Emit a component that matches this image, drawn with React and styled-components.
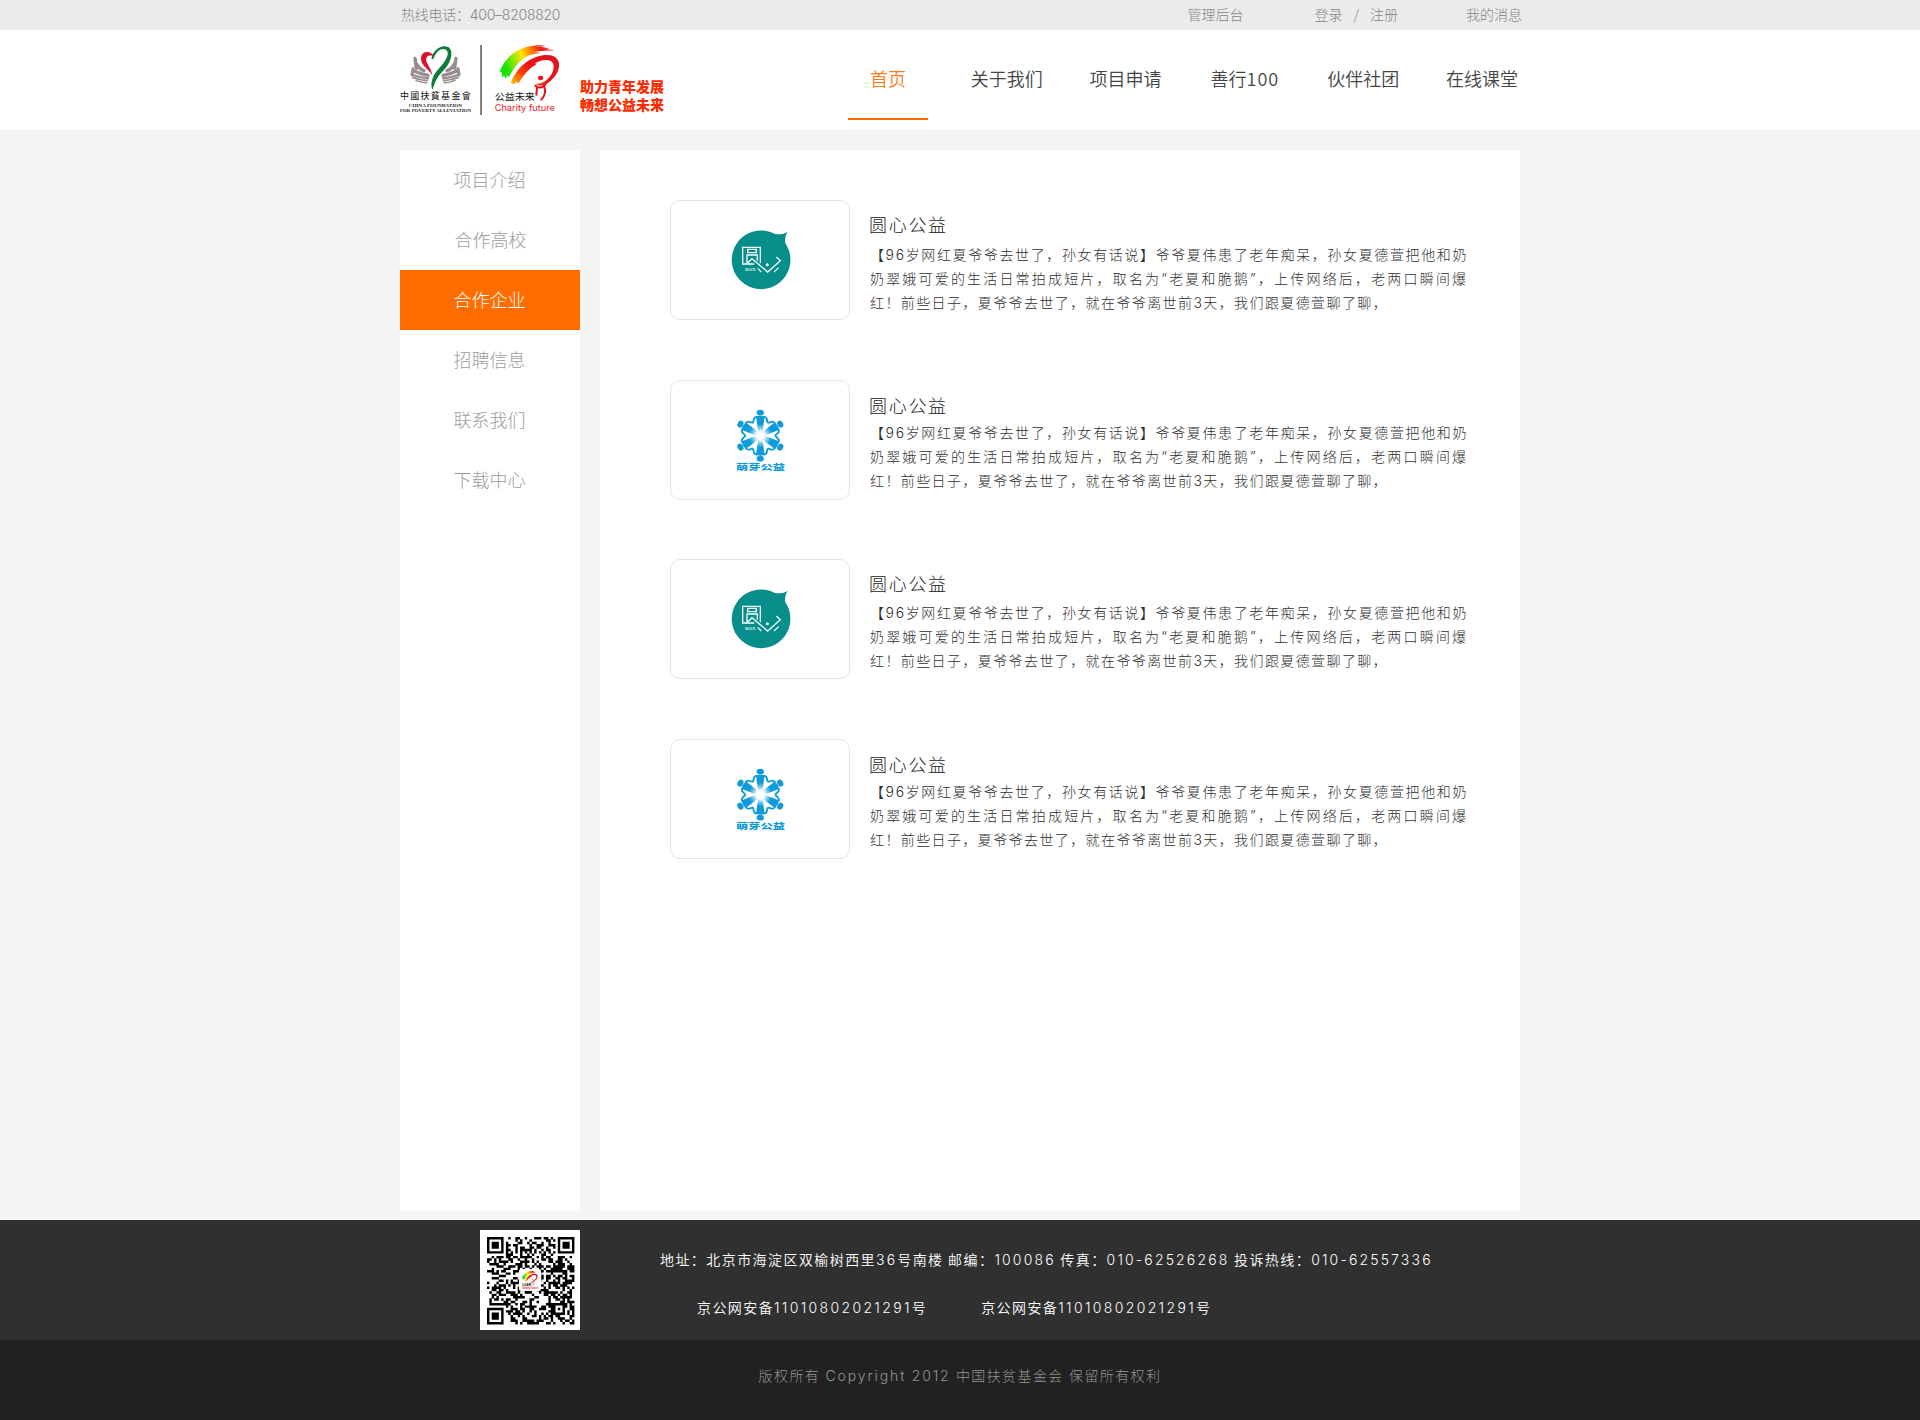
import React from "react";
import styled, { createGlobalStyle, css } from "styled-components";

const cjk = '"Noto Sans CJK SC", sans-serif';

const Global = createGlobalStyle`
  * { box-sizing: border-box; }
  body {
    margin: 0;
    background: #f5f5f5;
    font-family: ${cjk};
    font-weight: 300;
    font-size: 14px;
    color: #333;
  }
`;

const Page = styled.div`
  display: flex;
  flex-direction: column;
  min-height: 1420px;
`;

const Inner = styled.div`
  display: flex;
  width: 1120px;
  height: 100%;
  margin: 0 auto;
`;

const TopBar = styled.div`
  height: 30px;
  background: #ebebeb;
  color: #858585;
  line-height: 30px;
  white-space: pre;
`;

const Hotline = styled.span`
  padding-left: 1px;
  font-family: Inter, ${cjk};
  letter-spacing: -0.25px;
`;

const TopLinks = styled.div`
  display: flex;
  margin-left: auto;
  margin-right: -2px;
  line-height: 28px;
`;

const TopLink = styled.span`
  margin-left: ${(p) => p.$gap}px;
`;

const Header = styled.header`
  height: 100px;
  background: #fff;
`;

const LogoSvg = styled.svg`
  width: 160px;
  height: 70px;
  margin-top: 15px;
  flex: none;
  overflow: visible;
`;

const Slogan = styled.div`
  margin: 47px 0 0 20px;
  font-weight: 900;
  font-size: 14px;
  line-height: 18px;
  color: #ff2a00;
  white-space: pre;
`;

const Nav = styled.nav`
  display: flex;
  gap: 38.8px;
  height: 90px;
  margin-left: auto;
  margin-right: -2px;
`;

const NavItem = styled.a`
  display: flex;
  justify-content: center;
  width: 80px;
  font-size: 18px;
  font-weight: 350;
  line-height: 97px;
  white-space: nowrap;
  color: ${(p) => (p.$active ? "#ff7a14" : "#444")};
  border-bottom: 2px solid ${(p) => (p.$active ? "#ff6d00" : "transparent")};
`;

const NavNumber = styled.span`
  letter-spacing: 1px;
  margin-right: -1px;
`;

const Main = styled.main`
  display: flex;
  gap: 20px;
  width: 1120px;
  height: 1061px;
  margin: 20px auto 9px;
`;

const Sidebar = styled.aside`
  width: 180px;
  background: #fff;
`;

const SideItem = styled.div`
  height: 60px;
  line-height: 58px;
  text-align: center;
  font-size: 18px;
  color: #9c9c9c;
  padding-right: ${(p) => (p.$shift ? 0 : 1)}px;
  padding-left: ${(p) => p.$shift || 0}px;
  ${(p) =>
    p.$active &&
    css`
      background: #ff6d00;
      color: #fff;
    `}
`;

const Content = styled.section`
  flex: 1;
  padding: 50px 0 0 70px;
  background: #fff;
`;

const Partner = styled.article`
  display: flex;
  height: 120px;
  margin-bottom: ${(p) => p.$after}px;
`;

const LogoCard = styled.div`
  display: flex;
  align-items: center;
  justify-content: center;
  width: 180px;
  height: 120px;
  border: 1px solid #e4e4e4;
  border-radius: 10px;
`;

const Info = styled.div`
  width: 600px;
  margin-left: 19px;
  padding-top: ${(p) => p.$top}px;
`;

const Title = styled.h3`
  margin: 0;
  font-weight: 300;
  font-size: 18px;
  line-height: 28px;
  letter-spacing: 1.7px;
  color: #222;
`;

const Text = styled.div`
  width: 599px;
  margin-top: ${(p) => p.$gap}px;
  padding-left: 1px;
  font-family: Inter, ${cjk};
  color: #303030;
`;

const Line = styled.p`
  margin: 0;
  line-height: 24px;
  white-space: nowrap;
  letter-spacing: ${(p) => p.$spacing}px;
`;

const Footer = styled.footer`
  height: 120px;
  background: #303030;
  color: #fff;
`;

const QrBox = styled.div`
  width: 100px;
  height: 100px;
  margin: 10px 0 0 80px;
  background: #fff;
`;

const Contact = styled.div`
  padding: 25px 0 0 80px;
  font-weight: 350;
  line-height: 28px;
  white-space: nowrap;
`;

const Latin = styled.span`
  font-family: Inter, ${cjk};
  font-weight: 300;
  letter-spacing: ${(p) => p.$spacing}px;
`;

const Address = styled.div`
  letter-spacing: 1.43px;
`;

const Records = styled.div`
  display: flex;
  gap: 54px;
  padding: 19px 0 0 37px;
  letter-spacing: 1.4px;
`;

const Copyright = styled.div`
  height: 80px;
  background: #212121;
  color: #949494;
  text-align: center;
  line-height: 70px;
  letter-spacing: 1.4px;
  word-spacing: 0.8px;
`;

function Mixed({ text, spacing }) {
  return text
    .split(/([A-Za-z0-9-]+)/)
    .map((part, i) => (i % 2 ? <Latin key={i} $spacing={spacing}>{part}</Latin> : part));
}

const hand = (
  <g fill="none" stroke="#978b8d" strokeLinecap="round" strokeLinejoin="round">
    <path d="M75 175 L79 205" strokeWidth="10" />
    <path d="M80 192 Q88 208 102 212" strokeWidth="10" />
    <path d="M69 206 L66 224" strokeWidth="9" />
    <path d="M70 212 Q92 222 114 226" strokeWidth="10" />
    <path d="M66 224 Q88 232 114 235" strokeWidth="6.5" />
    <path d="M68 232 Q88 240 112 242" strokeWidth="5.5" />
    <path d="M78 241 Q92 248 110 248" strokeWidth="4.5" />
  </g>
);

function CharityMark() {
  return (
    <g>
      <defs>
        <linearGradient id="rainbow" x1="0" x2="1" y1="0.3" y2="0">
          <stop offset="0" stopColor="#19e30c" />
          <stop offset="0.17" stopColor="#7fe808" />
          <stop offset="0.38" stopColor="#ffe600" />
          <stop offset="0.58" stopColor="#ff7a00" />
          <stop offset="0.75" stopColor="#f01414" />
        </linearGradient>
        <linearGradient id="flame" x1="0" x2="1" y1="0.8" y2="0">
          <stop offset="0" stopColor="#ffb000" />
          <stop offset="0.25" stopColor="#ff3a00" />
          <stop offset="0.5" stopColor="#e8111c" />
        </linearGradient>
      </defs>
      <path
        fill="url(#rainbow)"
        d="M329 214 C341 182 372 147 420 139 C442 134 458 135 466 138 L436 141 C452 140 470 142 478 146 L444 147 C462 147 482 147 491 152 C468 150 446 152 432 157 L452 158 L420 165 C390 178 370 204 357 232 L352 226 L347 236 L342 227 L335 232 L336 218 Z"
      />
      <path
        fill="url(#flame)"
        d="M362 249 C378 208 410 178 446 169 C478 160 503 167 507 190 C509 216 492 236 473 250 C462 258 446 259 437 252 C468 252 490 224 491 201 C492 180 472 177 452 182 L434 190 L441 191 C420 203 400 224 386 250 L378 247 L372 253 Z"
      />
      <ellipse cx="452" cy="234" rx="8" ry="6.5" fill="#e8111c" />
      <path
        d="M436 257 Q452 270 466 253 M441 265 L439 284 M463 261 C469 275 464 288 454 299"
        fill="none"
        stroke="#e8111c"
        strokeWidth="6"
        strokeLinecap="round"
      />
    </g>
  );
}

function BrandLogo() {
  return (
    <LogoSvg viewBox="30 135 480 210">
      {hand}
      <g transform="matrix(-1 0 0 1 273 0)">{hand}</g>
      <path
        fill="#d7142a"
        d="M127 228 C122 211 90 198 93 172 C97 150 124 151 134 172 C123 163 110 164 108 178 C110 195 124 203 127 228 Z"
      />
      <path
        fill="#0b7a3b"
        d="M124 176 C130 147 157 131 176 142 C194 157 180 194 158 214 C140 232 136 246 127 270 C119 246 130 224 148 204 C169 181 180 160 169 150 C155 141 138 153 130 178 Z"
      />
      <text x="30" y="298" fontSize="27" fontWeight="400" textLength="212" lengthAdjust="spacing" fill="#111" fontFamily='"Noto Sans CJK TC", sans-serif'>
        中國扶貧基金會
      </text>
      <g fontFamily='"Liberation Serif", serif' fontWeight="700" fontSize="12.5" fill="#222">
        <text x="56" y="320" textLength="160" lengthAdjust="spacingAndGlyphs">CHINA FOUNDATION</text>
        <text x="30" y="335" textLength="213" lengthAdjust="spacingAndGlyphs">FOR POVERTY ALLEVIATION</text>
      </g>
      <rect x="271" y="135" width="4.5" height="210" fill="#555" />
      <CharityMark />
      <text x="314" y="300" fontSize="28" fontWeight="400" textLength="120" lengthAdjust="spacingAndGlyphs" fill="#111" fontFamily='"Noto Sans CJK SC", sans-serif'>
        公益未来
      </text>
      <text x="314" y="332" fontSize="27" fontWeight="400" textLength="181" lengthAdjust="spacingAndGlyphs" fill="#f0202a" fontFamily="Inter, sans-serif">
        Charity future
      </text>
    </LogoSvg>
  );
}

function CircleLogo() {
  return (
    <svg width="63.33" height="63.33" viewBox="205 115 190 190">
      <path
        fill="#078d8a"
        d="M344 132 C358 136 372 134 384 126 C378 136 375 146 377 161 A88 88 0 1 1 344 132 Z"
      />
      <g fill="none" stroke="#f2ffff" strokeWidth="4">
        <path d="M284 223 H249 V173 H302 V220" />
        <path d="M264 179 H290 V189 H264 Z M262 221 V196 H293 V213 M264 220 L277 207 L324 247 L362 213 L350 202" />
        <path d="M294 236 L305 247 M343 247 L357 234" strokeWidth="3.5" />
      </g>
      <circle cx="323" cy="225" r="4.5" fill="#f2ffff" />
      <text x="256" y="245" fontSize="14" fontWeight="700" textLength="32" lengthAdjust="spacingAndGlyphs" fill="#d8f2f0" fontFamily='"Liberation Serif", serif'>
        BOX
      </text>
    </svg>
  );
}

function SnowLogo() {
  return (
    <svg width="50" height="66.67" viewBox="45 50 150 200">
      <defs>
        <radialGradient id="glow" gradientUnits="userSpaceOnUse" cx="0" cy="0" r="64">
          <stop offset="0.15" stopColor="#fff" />
          <stop offset="0.55" stopColor="#0f9bdb" />
        </radialGradient>
      </defs>
      <g transform="translate(121 136)">
        {[0, 60, 120, 180, 240, 300].map((a) => (
          <g key={a} transform={`rotate(${a})`}>
            <ellipse cx="0" cy="-69" rx="11" ry="8.5" fill="#0f9bdb" />
            <path d="M-13 -58 Q0 -62 13 -58 L9 -28 L4 -6 L0 -20 L-4 -6 L-9 -28 Z" fill="url(#glow)" />
            <path d="M-10 -57 Q-19 -56 -20 -47 L-22 -38 M10 -57 Q19 -56 20 -47 L22 -38" fill="none" stroke="#0f9bdb" strokeWidth="5.5" />
          </g>
        ))}
      </g>
      <text x="48" y="239" fontSize="23" fontWeight="900" textLength="147" lengthAdjust="spacingAndGlyphs" fill="#0f9bdb" fontFamily='"Noto Sans CJK SC", sans-serif'>
        萌芽公益
      </text>
    </svg>
  );
}

const QR_SIZE = 37;

function finderAt(x, y, fx, fy) {
  const dx = x - fx;
  const dy = y - fy;
  if (dx < -1 || dy < -1 || dx > 7 || dy > 7) return null;
  const ring = Math.max(Math.abs(dx - 3), Math.abs(dy - 3));
  return ring === 3 || ring <= 1;
}

function buildModules() {
  const out = [];
  let seed = 20121;
  for (let y = 0; y < QR_SIZE; y++) {
    for (let x = 0; x < QR_SIZE; x++) {
      seed = (seed * 1103515245 + 12345) % 2147483648;
      let on = seed / 2147483648 > 0.48;
      const align = Math.max(Math.abs(x - 30), Math.abs(y - 30));
      if (align <= 2) on = align !== 1;
      if (x === 6 || y === 6) on = (x + y) % 2 === 0;
      [[0, 0], [30, 0], [0, 30]].forEach(([fx, fy]) => {
        const f = finderAt(x, y, fx, fy);
        if (f !== null) on = f;
      });
      if (on) out.push(`M${x} ${y}h1.03v1.03h-1.03z`);
    }
  }
  return out.join("");
}

const qrPath = buildModules();

function QrCode() {
  return (
    <svg width="100" height="100" viewBox="0 0 100 100">
      <g transform="translate(7 7) scale(2.36)">
        <path d={qrPath} fill="#000" />
      </g>
      <rect x="39" y="39" width="22" height="22" rx="2" fill="#fff" />
      <g transform="translate(42 41) scale(0.088) translate(-329 -135)">
        <CharityMark />
      </g>
      <text x="42" y="56" fontSize="3.6" fontWeight="700" textLength="9" lengthAdjust="spacingAndGlyphs" fill="#111" fontFamily='"Noto Sans CJK SC", sans-serif'>公益未来</text>
      <text x="42" y="59" fontSize="3" fontWeight="700" textLength="16" lengthAdjust="spacingAndGlyphs" fill="#e02020" fontFamily='"Liberation Sans", sans-serif'>Charity future</text>
    </svg>
  );
}

const navItems = [
  { label: "首页" },
  { label: "关于我们" },
  { label: "项目申请" },
  { label: "善行", number: "100" },
  { label: "伙伴社团" },
  { label: "在线课堂" },
];
const sideItems = ["项目介绍", "合作高校", "合作企业", "招聘信息", "联系我们", "下载中心"];

const partners = [
  { Logo: CircleLogo, top: 10, gap: 5, after: 60 },
  { Logo: SnowLogo, top: 11, gap: 2, after: 59 },
  { Logo: CircleLogo, top: 10, gap: 4, after: 60 },
  { Logo: SnowLogo, top: 11, gap: 2, after: 0 },
];

const lines = [
  { text: "【96岁网红夏爷爷去世了，孙女有话说】爷爷夏伟患了老年痴呆，孙女夏德萱把他和奶", spacing: 1.62 },
  { text: "奶翠娥可爱的生活日常拍成短片，取名为“老夏和脆鹅”，上传网络后，老两口瞬间爆", spacing: 2.18 },
  { text: "红！前些日子，夏爷爷去世了，就在爷爷离世前3天，我们跟夏德萱聊了聊，", spacing: 1.4 },
];

export default function App() {
  return (
    <Page>
      <Global />
      <TopBar>
        <Inner>
          <Hotline>热线电话：400–8208820</Hotline>
          <TopLinks>
            <TopLink>管理后台</TopLink>
            <TopLink $gap={71}>登录</TopLink>
            <TopLink $gap={11}>/</TopLink>
            <TopLink $gap={11}>注册</TopLink>
            <TopLink $gap={68}>我的消息</TopLink>
          </TopLinks>
        </Inner>
      </TopBar>
      <Header>
        <Inner>
          <BrandLogo />
          <Slogan>{"助力青年发展\n畅想公益未来"}</Slogan>
          <Nav>
            {navItems.map((item, i) => (
              <NavItem key={item.label} $active={i === 0}>
                {item.label}
                {item.number && <NavNumber>{item.number}</NavNumber>}
              </NavItem>
            ))}
          </Nav>
        </Inner>
      </Header>
      <Main>
        <Sidebar>
          {sideItems.map((item, i) => (
            <SideItem key={item} $active={i === 2} $shift={i === 1 ? 1 : 0}>{item}</SideItem>
          ))}
        </Sidebar>
        <Content>
          {partners.map(({ Logo, top, gap, after }, i) => (
            <Partner key={i} $after={after}>
              <LogoCard><Logo /></LogoCard>
              <Info $top={top}>
                <Title>圆心公益</Title>
                <Text $gap={gap}>
                  {lines.map((l) => (
                    <Line key={l.text} $spacing={l.spacing}>{l.text}</Line>
                  ))}
                </Text>
              </Info>
            </Partner>
          ))}
        </Content>
      </Main>
      <Footer>
        <Inner>
          <QrBox><QrCode /></QrBox>
          <Contact>
            <Address>
              <Mixed spacing={2.15} text="地址：北京市海淀区双榆树西里36号南楼 邮编：100086 传真：010-62526268 投诉热线：010-62557336" />
            </Address>
            <Records>
              <span><Mixed spacing={2.35} text="京公网安备11010802021291号" /></span>
              <span><Mixed spacing={2.35} text="京公网安备11010802021291号" /></span>
            </Records>
          </Contact>
        </Inner>
      </Footer>
      <Copyright>
        <Mixed spacing={1.9} text="版权所有 Copyright 2012 中国扶贫基金会 保留所有权利" />
      </Copyright>
    </Page>
  );
}
